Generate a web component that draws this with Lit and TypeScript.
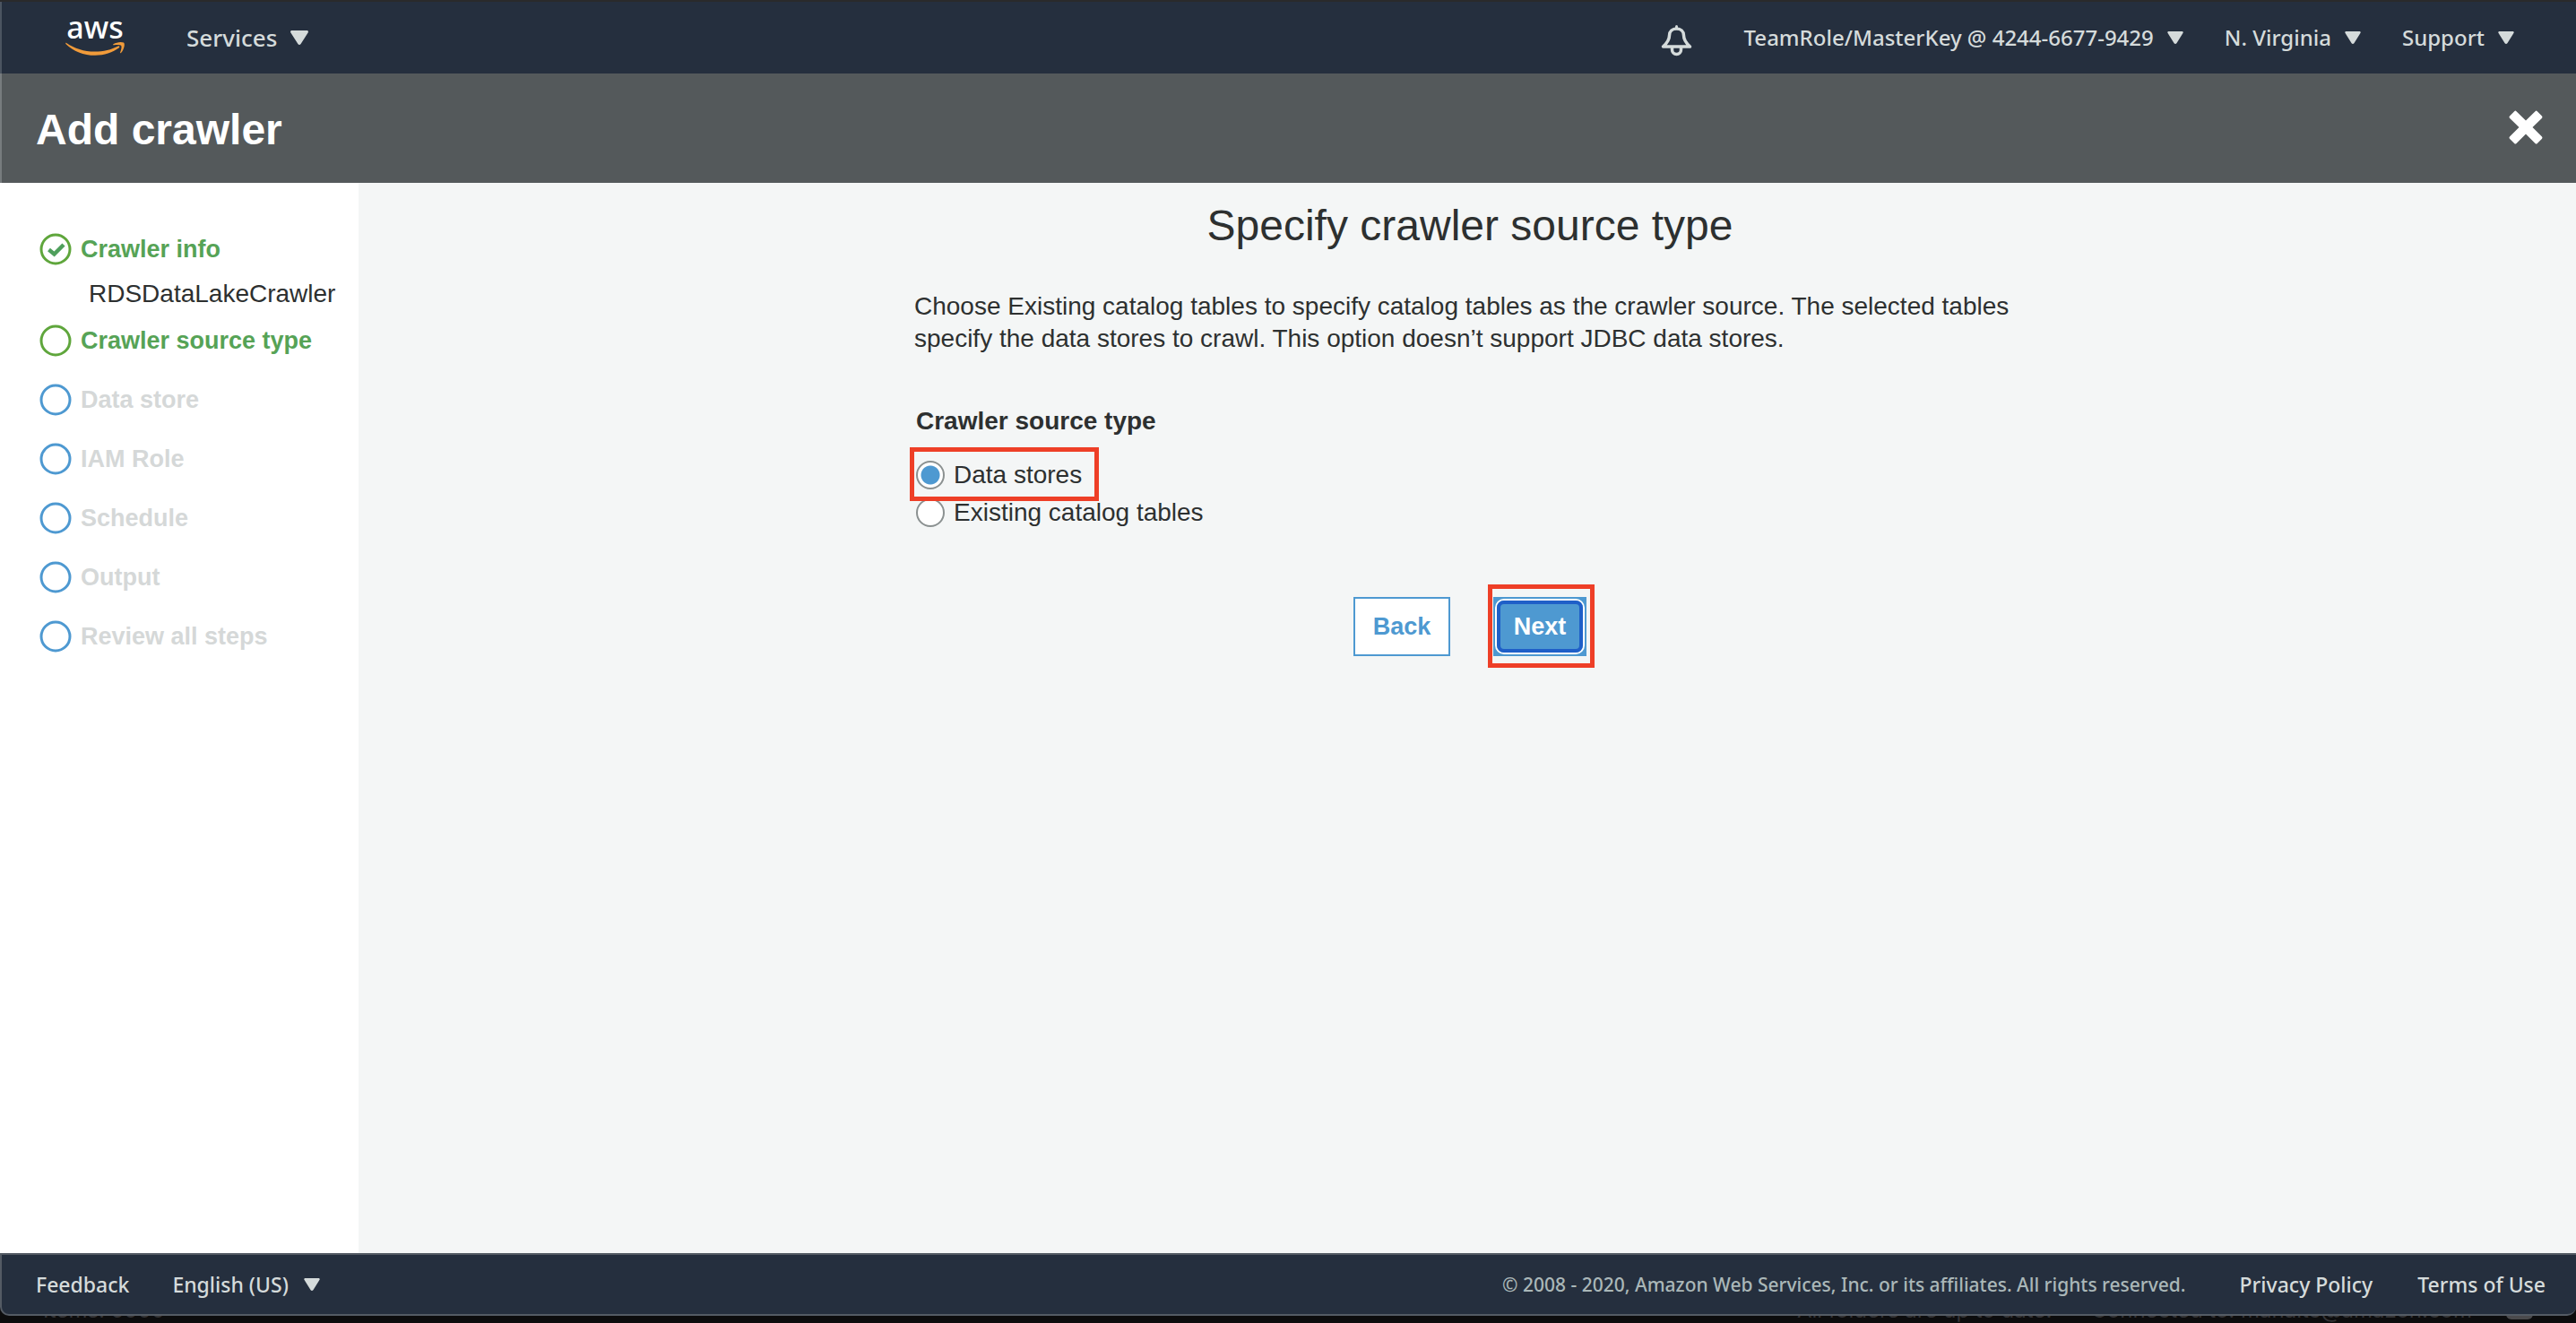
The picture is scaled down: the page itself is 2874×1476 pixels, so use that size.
import { LitElement, html, css, svg, nothing } from "lit";
import { customElement, property, state } from "lit/decorators.js";
import { classMap } from "lit/directives/class-map.js";

type StepState = "done" | "current" | "todo";

interface Step {
  label: string;
  state: StepState;
  detail?: string;
}

const STEPS: Step[] = [
  { label: "Crawler info", state: "done", detail: "RDSDataLakeCrawler" },
  { label: "Crawler source type", state: "current" },
  { label: "Data store", state: "todo" },
  { label: "IAM Role", state: "todo" },
  { label: "Schedule", state: "todo" },
  { label: "Output", state: "todo" },
  { label: "Review all steps", state: "todo" },
];

const caret = html`<svg class="caret" viewBox="0 0 20 16" aria-hidden="true">
  <path d="M1.6 0h16.8c1.3 0 2 1.300 1.200 2.400l-8 12.700c-.8 1.200-2.400 1.200-3.200 0L.4 2.400C-.4 1.300.3 0 1.600 0z" fill="currentColor" />
</svg>`;

@customElement("console-header")
export class ConsoleHeader extends LitElement {
  static styles = css`
    :host {
      display: block;
      font-family: "Noto Sans", "Open Sans", sans-serif;
      color: #d5dbdb;
      background: #252f3e;
      border-top: 2px solid #2a2a2b;
    }
    .bar {
      display: flex;
      align-items: center;
      height: 80px;
      padding: 0 69px 0 71px;
      border-left: 2px solid #4b5460;
    }
    .logo {
      display: block;
      width: 66px;
      height: 48px;
    }
    .logo svg {
      display: block;
      width: 66px;
      height: 48px;
      overflow: visible;
    }
    .word {
      font: 500 34px "Noto Sans", sans-serif;
      fill: #ffffff;
    }
    button {
      display: flex;
      align-items: center;
      border: 0;
      padding: 0;
      background: none;
      color: inherit;
      font: 500 24px/36px "Noto Sans", "Open Sans", sans-serif;
      gap: 15px;
    }
    .services {
      margin-left: 69px;
      font-size: 26px;
    }
    .caret {
      width: 18px;
      height: 14px;
    }
    .services .caret {
      width: 20px;
      height: 16px;
    }
    nav {
      display: flex;
      align-items: center;
      gap: 46px;
      margin-left: auto;
    }
    .bell {
      padding-top: 6px;
      margin-right: 12px;
    }
    .bell svg {
      display: block;
      width: 35px;
      height: 35px;
    }
  `;

  render() {
    return html`<header class="bar">
      <a class="logo" href="#home" aria-label="AWS home">
        <svg viewBox="0 0 66 48" aria-hidden="true">
          <text class="word" x="33" y="25" text-anchor="middle">aws</text>
          <path d="M1.200 30c9 6 19.500 9.600 31.500 9.600 9.500 0 18.800-2.400 26-6.200 1.400-.7 2.400.8 1.200 1.900C53 40.500 43 43.800 33 43.800 20.500 43.800 8.500 39 .6 31.200c-.8-.8-.3-1.700.6-1.200z" fill="#f19b3a" />
          <path d="M53.500 31.200c3-1.900 8.500-3 11.500-1.600 1.900 1.300.3 8.500-3 11.400-.6.5-1.200.2-.9-.6 1-2.600 1.900-5.800 1.200-7.500-1.300-1.100-5-1-8.200-.6-1 .1-1.400-.6-.6-1.100z" fill="#f19b3a" />
        </svg>
      </a>
      <button class="services" type="button">Services ${caret}</button>
      <nav aria-label="Account">
        <button class="bell" type="button" aria-label="Notifications">
          <svg viewBox="0 0 35 35" fill="none" stroke="#d5dbdb" aria-hidden="true">
            <path d="M2.500 24C7 20 9.500 17 9.500 11.500 9.500 7 13 4 17.500 4s8 3 8 7.500C25.500 17 28 20 32.500 24z" stroke-width="3.500" stroke-linejoin="round" />
            <path d="M17.500 3V1.500" stroke-width="3" stroke-linecap="round" />
            <path d="M12.500 25v2.500a5 5 0 0 0 10 0V25" stroke-width="3.500" />
          </svg>
        </button>
        <button type="button">TeamRole/MasterKey @ 4244-6677-9429 ${caret}</button>
        <button type="button">N. Virginia ${caret}</button>
        <button type="button">Support ${caret}</button>
      </nav>
    </header>`;
  }
}

@customElement("wizard-steps")
export class WizardSteps extends LitElement {
  @property({ attribute: false }) steps: Step[] = [];

  static styles = css`
    :host {
      display: block;
      font: 28px/36px "Liberation Sans", Arial, sans-serif;
      color: #2d3030;
    }
    ol {
      list-style: none;
      margin: 0;
      padding: 56px 0 0 44px;
      display: flex;
      flex-direction: column;
      gap: 30px;
    }
    li.detailed {
      margin-bottom: -14px;
    }
    .row {
      display: flex;
      align-items: center;
      gap: 10px;
      font-size: 27px;
      font-weight: 700;
      color: #d5d8d8;
    }
    .row svg {
      width: 36px;
      height: 36px;
      color: #4e99d1;
    }
    .done,
    .current {
      color: #56a356;
    }
    .done svg,
    .current svg {
      color: #5fa63c;
    }
    .detail {
      margin: 14px 0 0 55px;
    }
  `;

  render() {
    return html`<ol>
      ${this.steps.map(
        (step) => html`<li class=${classMap({ detailed: !!step.detail })}>
          <div class="row ${step.state}">
            <svg viewBox="0 0 36 36" fill="none" aria-hidden="true">
              <circle cx="18" cy="18" r="16" stroke="currentColor" stroke-width="3" />
              ${step.state === "done"
                ? svg`<path d="M10.500 18.500l6 5L27 13" stroke="#4f9f5c" stroke-width="4.500" />`
                : nothing}
            </svg>
            <span>${step.label}</span>
          </div>
          ${step.detail ? html`<div class="detail">${step.detail}</div>` : nothing}
        </li>`
      )}
    </ol>`;
  }
}

@customElement("source-form")
export class SourceForm extends LitElement {
  @state() private source = "stores";

  static styles = css`
    :host {
      display: block;
      font: 28px/36px "Liberation Sans", Arial, sans-serif;
      color: #2d3030;
    }
    .column {
      max-width: 1240px;
      margin: 0 auto;
      padding: 18px 0 60px 6px;
    }
    h2 {
      margin: 0 0 42px;
      font-size: 48px;
      line-height: 60px;
      font-weight: 400;
      text-align: center;
    }
    p {
      margin: 0 0 56px;
    }
    fieldset {
      display: flex;
      flex-direction: column;
      align-items: flex-start;
      gap: 6px;
      border: 0;
      margin: 0;
      padding: 0 0 0 2px;
    }
    legend {
      padding: 0;
      margin-bottom: 24px;
      font-weight: 700;
    }
    label {
      display: flex;
      align-items: center;
      gap: 10px;
    }
    input {
      appearance: none;
      flex: none;
      box-sizing: border-box;
      width: 32px;
      height: 32px;
      margin: 0;
      border: 2px solid #8b9191;
      border-radius: 50%;
      background: #ffffff;
    }
    input:checked {
      background: radial-gradient(circle, #4e99d1 0 10px, #ffffff 11px);
    }
    .marked {
      position: relative;
    }
    .marked::before {
      content: "";
      position: absolute;
      z-index: 1;
      border: 5px solid #ee3f27;
      pointer-events: none;
    }
    label.marked::before {
      inset: -13px -19px -11px -7px;
    }
    .actions {
      display: flex;
      justify-content: center;
      gap: 48px;
      margin-top: 76px;
    }
    button {
      box-sizing: border-box;
      min-width: 108px;
      height: 66px;
      padding: 0 18px;
      border: 2px solid #4e99d1;
      border-radius: 0;
      background: #ffffff;
      color: #4e99d1;
      font: 700 27px/36px "Liberation Sans", Arial, sans-serif;
    }
    .next {
      display: block;
      min-width: 104px;
      background: #4e99d1;
      color: #ffffff;
    }
    .next::after {
      content: "";
      position: absolute;
      inset: 4px;
      border: 4px solid #1f5fc8;
      border-radius: 8px;
      box-shadow: 0 0 0 2px #ffffff;
    }
    .hot::before {
      inset: -14px -9px -13px -6px;
    }
  `;

  private pick(value: string) {
    this.source = value;
  }

  render() {
    return html`<form class="column" @submit=${(e: Event) => e.preventDefault()}>
      <h2>Specify crawler source type</h2>
      <p>
        Choose Existing catalog tables to specify catalog tables as the crawler source. The selected
        tables specify the data stores to crawl. This option doesn’t support JDBC data stores.
      </p>
      <fieldset>
        <legend>Crawler source type</legend>
        <label class="marked" for="stores">
          <input id="stores" type="radio" name="source" .checked=${this.source === "stores"} @change=${() => this.pick("stores")} />
          Data stores
        </label>
        <label for="tables">
          <input id="tables" type="radio" name="source" .checked=${this.source === "tables"} @change=${() => this.pick("tables")} />
          Existing catalog tables
        </label>
      </fieldset>
      <div class="actions">
        <button type="button">Back</button>
        <span class="marked hot"><button class="next" type="submit">Next</button></span>
      </div>
    </form>`;
  }
}

@customElement("console-footer")
export class ConsoleFooter extends LitElement {
  static styles = css`
    :host {
      display: block;
      background: #0c0c0d;
      font: 500 23px/36px "Noto Sans", "Open Sans", sans-serif;
    }
    .bar {
      display: flex;
      align-items: center;
      box-sizing: border-box;
      height: 70px;
      padding: 0 34px 0 38px;
      border: 2px solid #545b64;
      border-right: 0;
      border-radius: 0 0 10px 10px;
      background: #252f3e;
      color: #d5dbdb;
    }
    a {
      color: inherit;
      text-decoration: none;
    }
    button {
      display: flex;
      align-items: center;
      gap: 17px;
      margin-left: 48px;
      border: 0;
      padding: 0;
      background: none;
      color: inherit;
      font: inherit;
    }
    .caret {
      width: 18px;
      height: 14px;
    }
    .legal {
      display: flex;
      align-items: center;
      gap: 50px;
      margin-left: auto;
    }
    .copy {
      margin-right: 10px;
      font-size: 21px;
      color: #aab7b8;
    }
    .behind {
      display: flex;
      align-items: flex-end;
      justify-content: flex-end;
      height: 8px;
      padding: 0 48px;
      overflow: hidden;
      font: 24px/28px "Inter", sans-serif;
      color: #343436;
    }
    .count {
      margin-right: auto;
    }
    .sync {
      margin-right: 44px;
    }
    .chip {
      width: 30px;
      height: 30px;
      margin: 0 0 4px 38px;
      border-radius: 6px;
      background: #4a4a4c;
    }
  `;

  render() {
    return html`<footer>
      <div class="bar">
        <a href="#feedback">Feedback</a>
        <button type="button">English (US) ${caret}</button>
        <div class="legal">
          <span class="copy">© 2008 - 2020, Amazon Web Services, Inc. or its affiliates. All rights reserved.</span>
          <a href="#privacy">Privacy Policy</a>
          <a href="#terms">Terms of Use</a>
        </div>
      </div>
      <div class="behind">
        <span class="count">Items: 5000</span>
        <span class="sync">All folders are up to date.</span>
        <span>Connected to: mahaitc@amazon.com</span>
        <span class="chip"></span>
      </div>
    </footer>`;
  }
}

@customElement("app-root")
export class AppRoot extends LitElement {
  static styles = css`
    :host {
      display: flex;
      flex-direction: column;
      min-height: 100vh;
      background: #f4f6f6;
    }
    .title {
      display: flex;
      align-items: center;
      justify-content: space-between;
      box-sizing: border-box;
      height: 122px;
      padding: 0 37px 0 38px;
      border-left: 2px solid #777c7e;
      background: #54595b;
      color: #ffffff;
    }
    h1 {
      margin: 0;
      padding-top: 4px;
      font: 700 48px/60px "Liberation Sans", Arial, sans-serif;
    }
    .close {
      border: 0;
      padding: 0 0 2px;
      background: none;
    }
    .close svg {
      display: block;
      width: 38px;
      height: 38px;
    }
    .body {
      flex: 1;
      display: flex;
    }
    aside {
      flex: none;
      width: 400px;
      background: #ffffff;
    }
    main {
      flex: 1;
      min-width: 0;
    }
  `;

  render() {
    return html`
      <console-header></console-header>
      <div class="title">
        <h1>Add crawler</h1>
        <button class="close" type="button" aria-label="Close">
          <svg viewBox="0 0 38 38" aria-hidden="true">
            <path d="M8.500 1.200L19 11.500 29.500 1.200c.8-.8 1.500-.8 2.300 0l5 5c.9.9.9 1.800 0 2.700L26.500 19l10.300 10.200c.9.900.9 1.800 0 2.700l-5 5c-.8.8-1.500.8-2.300 0L19 26.500 8.500 36.900c-.8.8-1.500.8-2.300 0l-5-5c-.9-.9-.9-1.800 0-2.700L11.500 19 1.200 8.900c-.9-.9-.9-1.800 0-2.700l5-5c.8-.8 1.500-.8 2.300 0z" fill="#ffffff" />
          </svg>
        </button>
      </div>
      <div class="body">
        <aside><wizard-steps .steps=${STEPS}></wizard-steps></aside>
        <main><source-form></source-form></main>
      </div>
      <console-footer></console-footer>
    `;
  }
}
